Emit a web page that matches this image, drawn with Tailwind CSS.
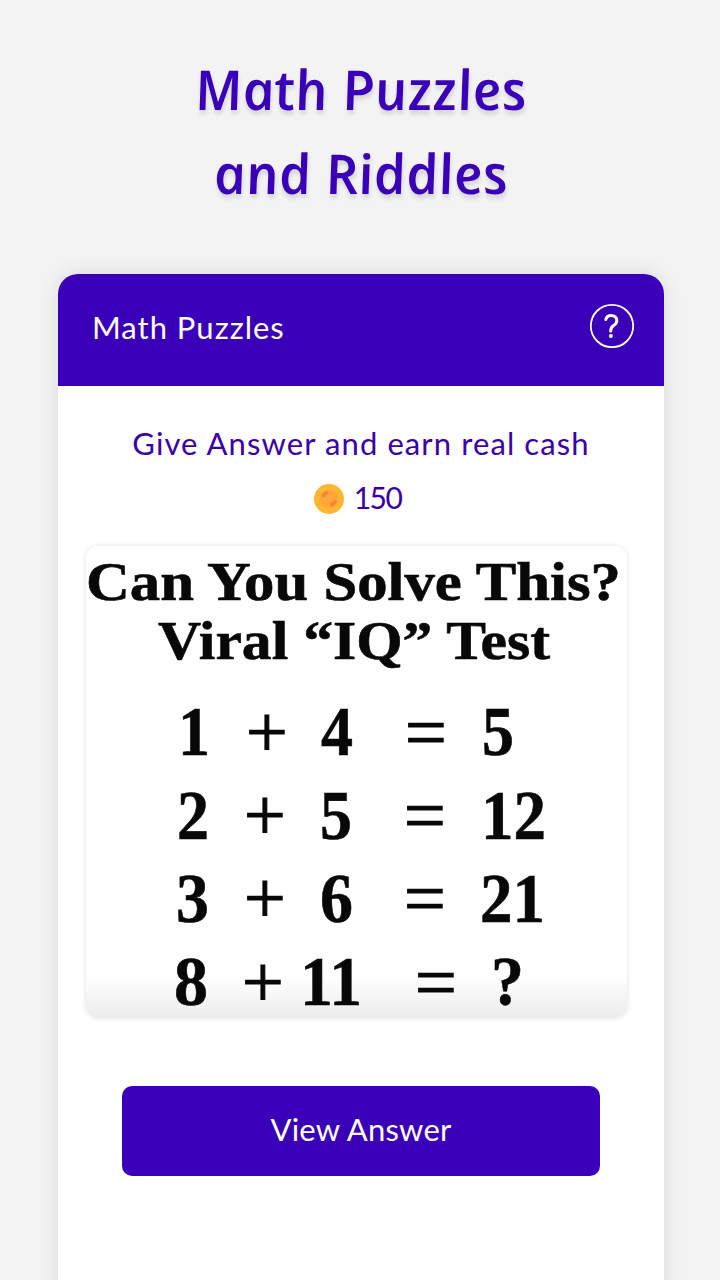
<!DOCTYPE html>
<html lang="en">
<head>
  <meta charset="UTF-8">
  <meta name="viewport" content="width=device-width, initial-scale=1.0">
  <title>Math Puzzles and Riddles</title>
  <script src="https://cdn.jsdelivr.net/npm/@tailwindcss/browser@4"></script>
</head>
<body class="bg-[#f3f3f3] font-[Lato,sans-serif]">
  <div class="w-[720px] h-[1280px] overflow-hidden flex flex-col">
    <h1 class="h-[274px] shrink-0 pt-[47px] text-center text-[55px] leading-[84px] font-semibold italic text-[#3a00b8] font-['Open_Sans',sans-serif] text-shadow-[0_4px_4px_rgb(0_0_0/0.13)]">
      <span class="block skew-x-[10deg] tracking-[0.2px]">Math Puzzles</span>
      <span class="block skew-x-[10deg] tracking-[0.2px]">and Riddles</span>
    </h1>

    <main class="ml-[58px] w-[606px] h-[1040px] shrink-0 rounded-t-[20px] bg-white shadow-[0_0_20px_rgba(0,0,0,0.1)]">
      <header class="flex justify-between h-28 pl-[34px] pr-[29px] pt-[29px] rounded-t-[20px] bg-[#3a00b8] text-white">
        <h2 class="text-[31px] leading-[48px] tracking-[1px]">Math Puzzles</h2>
        <svg class="size-[46px]" viewBox="0 0 46 46" fill="none" stroke="white" stroke-linecap="round">
          <circle cx="23" cy="23" r="21.2" stroke-width="1.8" />
          <path d="M16.8 16.5c.6-2.7 2.7-4.1 5.4-4.1 3.4 0 5.6 2.1 5.6 5 0 2.5-1.3 3.8-3.2 5.1-2.2 1.5-2.9 2.8-2.9 5.4" stroke-width="3" />
          <circle cx="21.9" cy="33" r="2" fill="white" stroke="none" />
        </svg>
      </header>

      <p class="pt-8 text-center text-[31px] leading-[50px] tracking-[1.1px] text-[#3a00a8]">Give Answer and earn real cash</p>
      <div class="mt-1.5 flex items-center justify-center gap-2.5 h-[50px] pr-[7px] text-[#3a00a8]">
        <svg class="size-[30px]" viewBox="0 0 30 30">
          <circle cx="15" cy="15" r="15" fill="#fdb62f" />
          <circle cx="15" cy="15" r="9.3" fill="#ffa73b" />
          <path d="M8.5 13c1-2.4 2.8-4 5.5-4.7M16.4 21.3c2.7-.7 4.5-2.3 5.3-4.8" fill="none" stroke="#fa8530" stroke-width="3.6" />
        </svg>
        <span class="pb-[3px] text-[30px] leading-[47px] tracking-[-1.6px]">150</span>
      </div>

      <!-- puzzle card -->
      <div class="mt-[22px] ml-7 w-[541px] h-[472px] rounded-xl bg-linear-to-b from-white from-91% to-[#ececec] shadow-[0_0_5px_rgba(0,0,0,0.12)]">
        <svg class="overflow-visible" width="541" height="472" viewBox="86 546 541 472" fill="#080808" font-family="Liberation Serif, serif" font-weight="bold">
          <g font-size="55" stroke="#080808" stroke-width="0.6">
            <text x="86" y="600" textLength="535" lengthAdjust="spacingAndGlyphs">Can You Solve This?</text>
            <text x="158" y="659" textLength="392" lengthAdjust="spacingAndGlyphs">Viral “IQ” Test</text>
          </g>
          <g font-size="69" stroke="#080808" stroke-width="0.6">
            <text x="178" y="755" textLength="32" lengthAdjust="spacingAndGlyphs">1</text>
            <text x="321" y="755" textLength="32" lengthAdjust="spacingAndGlyphs">4</text>
            <text x="482" y="755" textLength="32" lengthAdjust="spacingAndGlyphs">5</text>
            <text x="177" y="839" textLength="32" lengthAdjust="spacingAndGlyphs">2</text>
            <text x="320" y="839" textLength="32" lengthAdjust="spacingAndGlyphs">5</text>
            <text x="481" y="839" textLength="65" lengthAdjust="spacingAndGlyphs">12</text>
            <text x="176" y="922" textLength="33" lengthAdjust="spacingAndGlyphs">3</text>
            <text x="320" y="922" textLength="33" lengthAdjust="spacingAndGlyphs">6</text>
            <text x="480" y="922" textLength="65" lengthAdjust="spacingAndGlyphs">21</text>
            <text x="174" y="1005" textLength="34" lengthAdjust="spacingAndGlyphs">8</text>
            <text x="300" y="1005" textLength="62" lengthAdjust="spacingAndGlyphs">11</text>
            <text x="491" y="1005" textLength="33" lengthAdjust="spacingAndGlyphs">?</text>
          </g>
          <g font-size="74" font-weight="normal" stroke="#080808" stroke-width="1.2">
            <text x="246" y="757">+</text>
            <text x="405" y="757">=</text>
            <text x="244" y="840">+</text>
            <text x="404" y="840">=</text>
            <text x="244" y="923">+</text>
            <text x="404" y="923">=</text>
            <text x="242" y="1007">+</text>
            <text x="415" y="1007">=</text>
          </g>
        </svg>
      </div>

      <button class="block mt-[68px] ml-16 w-[478px] h-[90px] pb-[3px] rounded-[10px] bg-[#3a00b8] text-white text-[31px] tracking-[0.2px]">View Answer</button>
    </main>
  </div>
</body>
</html>
